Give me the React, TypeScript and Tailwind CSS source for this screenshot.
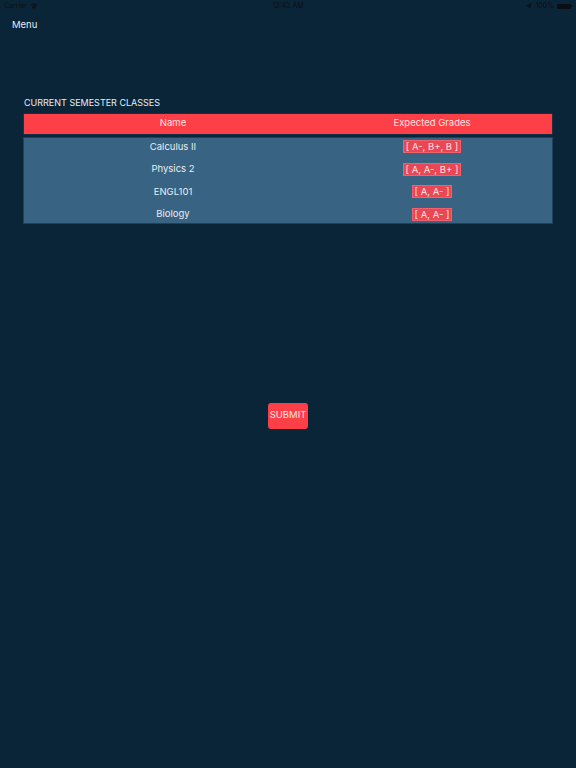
const classes = [
  { name: "Calculus II", grades: "[ A-, B+, B ]" },
  { name: "Physics 2", grades: "[ A, A-, B+ ]" },
  { name: "ENGL101", grades: "[ A, A- ]" },
  { name: "Biology", grades: "[ A, A- ]" },
];

function StatusBar() {
  return (
    <div className="h-[12px] flex items-center justify-between px-[4px] text-[7px] text-[#0a0f14]">
      <div className="flex items-center gap-[3px] w-[120px]">
        <span>Carrier</span>
        <svg width="8" height="6" viewBox="0 0 16 12" fill="currentColor">
          <path d="M8 12 L5.2 8.8 A4 4 0 0 1 10.8 8.8 Z" />
          <path d="M3.6 7 A6.5 6.5 0 0 1 12.4 7 L11.2 8.3 A4.8 4.8 0 0 0 4.8 8.3 Z" />
          <path d="M1.2 4.4 A10 10 0 0 1 14.8 4.4 L13.6 5.7 A8.2 8.2 0 0 0 2.4 5.7 Z" />
        </svg>
      </div>
      <span>12:43 AM</span>
      <div className="flex items-center justify-end gap-[3px] w-[120px]">
        <svg width="6" height="6" viewBox="0 0 10 10" fill="currentColor">
          <path d="M10 0 L0 4.5 L4.5 5.5 L5.5 10 Z" />
        </svg>
        <span>100%</span>
        <div className="flex items-center">
          <div className="w-[14px] h-[5px] bg-[#0a0f14] rounded-[1px]" />
          <div className="w-[1px] h-[2px] bg-[#0a0f14]" />
        </div>
      </div>
    </div>
  );
}

export default function App() {
  return (
    <main
      className="w-[576px] h-[768px] bg-[#0b2538] text-white flex flex-col"
      style={{ fontFamily: "Inter, 'Liberation Sans', sans-serif" }}
    >
      <StatusBar />

      <div className="h-[24px] flex items-center px-[12px] pt-[2px]">
        <button className="text-[9.5px] text-[#e6ecf0]">Menu</button>
      </div>

      <section className="mt-[60px] px-[23px]">
        <h2 className="text-[9px] text-[#e6ecf0] pl-[1px] mb-[3px]">CURRENT SEMESTER CLASSES</h2>

        <div className="grid grid-cols-[298px_1fr] h-[22px] items-center bg-[#fd3f47] text-[9.5px] text-[#fde2e3] border border-[#163047]">
          <div className="text-center">Name</div>
          <div className="text-center pr-[10px]">Expected Grades</div>
        </div>

        <div className="mt-[2px] h-[87px] flex flex-col justify-between pt-[2px] pb-[1px] bg-[#386382] border border-[#21405a]">
          {classes.map((c) => (
            <div key={c.name} className="grid grid-cols-[298px_1fr] h-[14px] items-center text-[9.5px] text-[#e8eef2]">
              <div className="text-center">{c.name}</div>
              <div className="flex justify-center pr-[10px]">
                <span className="bg-[#e84753] border border-[#f2606c] text-[#fde4e6] px-[2px] leading-[11px]">
                  {c.grades}
                </span>
              </div>
            </div>
          ))}
        </div>
      </section>

      <div className="mt-[179px] flex justify-center">
        <button className="w-[40px] h-[26px] rounded-[3px] bg-[#fd3f47] text-[9.5px] text-[#fde2e3]">
          SUBMIT
        </button>
      </div>
    </main>
  );
}
